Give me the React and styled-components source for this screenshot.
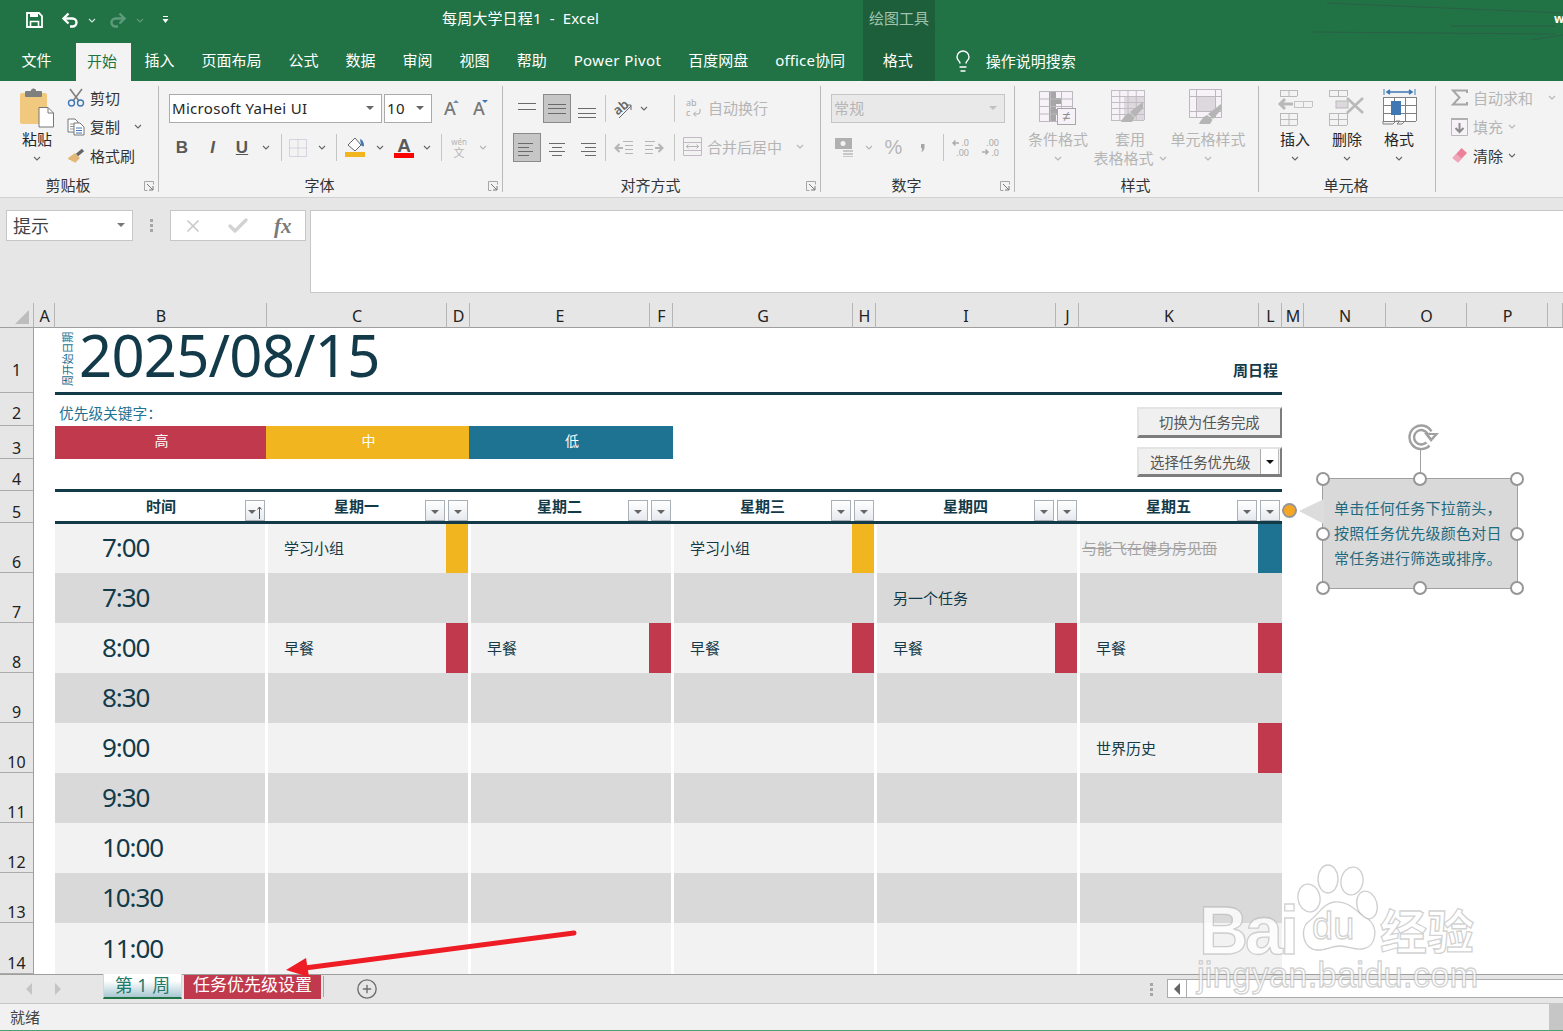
import React from "react";
import styled, { createGlobalStyle } from "styled-components";
import { Lightbulb, X, Check, CirclePlus } from "lucide-react";

const INK = "#123a49";
const TEAL = "#1e7393";
const RED = "#c1394d";
const AMBER = "#f1b51f";
const CJK = `"Noto Sans", "Noto Sans CJK SC", sans-serif`;

const GlobalStyle = createGlobalStyle`
  html, body { margin: 0; padding: 0; background: #fff; }
  body { font-family: ${CJK}; overflow: hidden; }
  * { box-sizing: border-box; }
`;

const Page = styled.div`
  position: relative;
  width: 1563px;
  height: 1031px;
  overflow: hidden;
  display: flex;
  flex-direction: column;
`;

/* title bar + tabs */
const TitleBar = styled.div`
  position: relative;
  height: 40px;
  background: #217346;
  display: flex;
  color: #fff;
  font-size: 15px;
  flex-shrink: 0;
`;
const Qat = styled.div`
  width: 442px;
  padding: 12px 0 0 26px;
  display: flex;
  align-items: flex-start;
`;
const QatSlot = styled.div`
  width: ${(p) => p.$w}px;
  padding-left: ${(p) => p.$pl || 0}px;
  height: 16px;
  display: flex;
  align-items: center;
`;
const WindowTitle = styled.div`
  width: 421px;
  line-height: 37px;
  white-space: pre;
  letter-spacing: 0.15px;
`;
const ContextLabel = styled.div`
  width: 72px;
  background: #1d5e3b;
  color: #9fc4ae;
  text-align: center;
  line-height: 37px;
`;
const UserName = styled.div`
  margin-left: auto;
  width: 9px;
  font-weight: 700;
  font-size: 12px;
  line-height: 37px;
`;
const Decor = styled.svg`
  position: absolute;
  right: 0;
  top: 0;
  pointer-events: none;
`;
const TabBar = styled.div`
  height: 41px;
  background: #217346;
  display: flex;
  padding-left: 8px;
  flex-shrink: 0;
  position: relative;
`;
const Tab = styled.div`
  padding: 0 13.5px;
  height: 38px;
  color: #fff;
  font-size: 15px;
  line-height: 41px;
  white-space: nowrap;
  letter-spacing: ${(p) => p.$ls || 0}px;
`;
const ActiveTab = styled(Tab)`
  margin: 3px 0 0 11px;
  padding: 0 14px 0 11px;
  height: 38px;
  line-height: 36px;
  background: #f3f3f3;
  color: #217346;
`;
const ContextTab = styled(Tab)`
  margin-left: 4px;
  width: 72px;
  height: 41px;
  padding: 0 2px 0 0;
  text-align: center;
  background: #1d5e3b;
`;
const SearchHint = styled.div`
  margin-left: 16px;
  display: flex;
  align-items: center;
  gap: 11px;
  color: #fff;
  font-size: 15px;
  height: 41px;
`;

/* ribbon */
const Ribbon = styled.div`
  height: 117px;
  background: #f3f3f3;
  border-bottom: 1px solid #d2d2d2;
  display: flex;
  padding-top: 5px;
  flex-shrink: 0;
`;
const Group = styled.div`
  position: relative;
  width: ${(p) => p.$w}px;
  height: 106px;
  border-right: ${(p) => (p.$open ? "none" : "1px solid #b9b9b9")};
  display: flex;
  flex-direction: column;
  flex-shrink: 0;
`;
const GroupBody = styled.div`
  height: 92px;
  padding-left: ${(p) => p.$pl || 0}px;
  display: ${(p) => (p.$flex ? "flex" : "block")};
`;
const GroupLabel = styled.div`
  text-align: center;
  font-size: 15px;
  line-height: 14px;
  color: #333;
  margin-left: ${(p) => p.$ml || 0}px;
`;
const Launcher = styled.svg`
  position: absolute;
  right: 4px;
  bottom: 1px;
`;
const ToolRow = styled.div`
  height: 29px;
  margin-top: ${(p) => p.$mt ?? 8}px;
  padding-left: ${(p) => p.$pl || 0}px;
  display: flex;
  align-items: center;
`;
const Slot = styled.div`
  width: ${(p) => p.$w}px;
  height: 29px;
  margin-left: ${(p) => p.$ml || 0}px;
  flex-shrink: 0;
  display: flex;
  align-items: center;
  justify-content: center;
  font-size: ${(p) => p.$fs || 15}px;
  color: ${(p) => (p.$off ? "#b5b5b5" : "#595959")};
  background: ${(p) => (p.$on ? "#c6c6c6" : "none")};
  border: ${(p) => (p.$on ? "1px solid #8a8a8a" : "none")};
  font-weight: ${(p) => (p.$bold ? 700 : 400)};
  font-style: ${(p) => (p.$italic ? "italic" : "normal")};
  text-decoration: ${(p) => (p.$under ? "underline" : "none")};
  font-family: ${(p) => (p.$latin ? `"Liberation Sans", sans-serif` : "inherit")};
`;
const ToolSep = styled.div`
  width: 1px;
  height: 27px;
  margin-left: ${(p) => p.$ml || 0}px;
  background: #c6c6c6;
  flex-shrink: 0;
`;
const ComboBox = styled.div`
  width: ${(p) => p.$w}px;
  height: 29px;
  margin-left: ${(p) => p.$ml || 0}px;
  background: ${(p) => (p.$off ? "#e9e9e9" : "#fff")};
  border: 1px solid ${(p) => (p.$off ? "#c6c6c6" : "#ababab")};
  display: flex;
  align-items: center;
  justify-content: space-between;
  padding: 0 7px 2px 2px;
  font-size: 15px;
  letter-spacing: 0.3px;
  color: ${(p) => (p.$off ? "#b5b5b5" : "#262626")};
  flex-shrink: 0;
`;
const Caret = styled.span`
  width: 0;
  height: 0;
  border-left: ${(p) => p.$s || 4}px solid transparent;
  border-right: ${(p) => p.$s || 4}px solid transparent;
  border-top: ${(p) => p.$s || 4}px solid ${(p) => p.$c || "#666"};
  flex-shrink: 0;
`;
const NavCaret = styled.span`
  width: 0;
  height: 0;
  border-top: 6px solid transparent;
  border-bottom: 6px solid transparent;
  ${(p) => (p.$right ? "border-left" : "border-right")}: 6px solid ${(p) => p.$c || "#c4c4c4"};
`;
const WideTool = styled.div`
  margin-left: ${(p) => p.$ml}px;
  display: flex;
  align-items: center;
  gap: ${(p) => p.$gap}px;
  font-size: 15px;
  color: #b5b5b5;
  height: 29px;
  padding-bottom: 2px;
  flex-shrink: 0;
`;
const BigCol = styled.div`
  width: ${(p) => p.$w}px;
  display: flex;
  flex-direction: column;
  align-items: center;
  font-size: 15px;
  line-height: 19px;
  color: ${(p) => (p.$off ? "#b5b5b5" : "#262626")};
  flex-shrink: 0;
`;
const BigIcon = styled.div`
  height: 44px;
  display: flex;
  align-items: center;
  justify-content: center;
`;
const BigText = styled.div`
  height: 19px;
  display: flex;
  align-items: center;
  gap: 5px;
  white-space: nowrap;
`;
const SmallList = styled.div`
  margin-left: ${(p) => p.$ml || 0}px;
  margin-top: -3px;
  display: flex;
  flex-direction: column;
`;
const SmallRow = styled.div`
  height: 29px;
  display: flex;
  align-items: center;
  font-size: 15px;
  color: ${(p) => (p.$off ? "#b5b5b5" : "#333")};
`;
const SmallIcon = styled.div`
  width: 18px;
  margin-right: 5px;
  display: flex;
  justify-content: center;
`;
const TailChev = styled.span`
  margin-left: ${(p) => p.$ml}px;
  display: flex;
`;

/* formula bar */
const FormulaZone = styled.div`
  height: 105px;
  background: #e6e6e6;
  display: flex;
  align-items: flex-start;
  padding: 12px 0 0 6px;
  flex-shrink: 0;
`;
const NameBox = styled.div`
  width: 127px;
  height: 31px;
  background: #fff;
  border: 1px solid #c6c6c6;
  display: flex;
  align-items: center;
  justify-content: space-between;
  padding: 0 7px 2px 6px;
  font-size: 18px;
  color: #444;
`;
const Grip = styled.div`
  width: 37px;
  height: 31px;
  display: flex;
  flex-direction: column;
  align-items: center;
  justify-content: center;
  gap: 2px;
  span { width: 3px; height: 3px; background: #a6a6a6; }
`;
const FxBox = styled.div`
  width: 136px;
  height: 31px;
  background: #fff;
  border: 1px solid #c6c6c6;
  display: flex;
  align-items: center;
  padding-left: 12px;
  gap: 23px;
`;
const FxMark = styled.span`
  font-family: "Liberation Serif", serif;
  font-style: italic;
  font-weight: 700;
  font-size: 21px;
  line-height: 26px;
  color: #7a7a7a;
  margin-left: 1px;
`;
const FormulaInput = styled.div`
  width: 1253px;
  height: 83px;
  margin-left: 4px;
  background: #fff;
  border: 1px solid #c6c6c6;
  border-right: none;
`;

/* worksheet */
const Sheet = styled.div`
  position: relative;
  height: 671px;
  flex-shrink: 0;
  background: #fff;
  display: grid;
  grid-template-columns: 34px 21px 212px 180px 23px 180px 23px 180px 23px 180px 23px 180px 23px 22px 82px 81px 81px 15px;
  grid-template-rows: 25px 65px 33px 33px 32px 32px repeat(8, 50px) 51px;
  overflow: hidden;
`;
const Corner = styled.div`
  grid-column: 1;
  grid-row: 1;
  background: #e6e6e6;
  border-bottom: 1px solid #9e9e9e;
  border-right: 1px solid #b5b5b5;
  display: flex;
  align-items: flex-end;
  justify-content: flex-end;
  padding: 0 3px 3px 0;
`;
const ColHead = styled.div`
  grid-row: 1;
  background: #e6e6e6;
  border-bottom: 1px solid #9e9e9e;
  border-right: 1px solid #b5b5b5;
  font-size: 16px;
  line-height: 26px;
  padding-left: 1px;
  text-align: center;
  color: #222;
  overflow: hidden;
`;
const RowHead = styled.div`
  grid-column: 1;
  grid-row: ${(p) => p.$row};
  background: #e6e6e6;
  border-bottom: 1px solid #ababab;
  border-right: 1px solid #9e9e9e;
  font-size: 16px;
  color: #222;
  display: flex;
  align-items: flex-end;
  justify-content: center;
  line-height: 15px;
  padding-bottom: ${(p) => p.$pb}px;
`;
const DateRow = styled.div`
  grid-column: 3 / 14;
  grid-row: 2;
  display: flex;
  align-items: flex-start;
  position: relative;
  z-index: 1;
  box-shadow: 0 2px 0 ${INK}, inset 0 -1px 0 ${INK};
`;
const DateHint = styled.div`
  writing-mode: vertical-rl;
  text-orientation: sideways;
  transform: rotate(180deg);
  font-size: 11px;
  letter-spacing: -0.2px;
  line-height: 13px;
  height: 53px;
  color: ${TEAL};
  margin: 5px 0 0 6px;
  white-space: nowrap;
`;
const DateText = styled.div`
  font-size: 58px;
  letter-spacing: -0.8px;
  line-height: 52px;
  color: ${INK};
  margin: 1px 0 0 5px;
`;
const SheetName = styled.div`
  margin: 31px 4px 0 auto;
  font-size: 15px;
  font-weight: 700;
  color: ${INK};
`;
const KeyLabel = styled.div`
  grid-column: 3 / 5;
  grid-row: 3;
  font-size: 14.7px;
  color: ${TEAL};
  padding: 12px 0 0 4px;
  line-height: 17px;
`;
const KeyCell = styled.div`
  grid-column: ${(p) => p.$col} / span 2;
  grid-row: 4;
  margin: 0 ${(p) => p.$mr || 0}px 0 -1px;
  background: ${(p) => p.$bg};
  color: #fff;
  font-size: 14px;
  display: flex;
  align-items: center;
  justify-content: center;
  padding: 0 0 5px 2px;
`;
const HighKey = styled(KeyCell)`
  grid-column: 3;
  margin: 0 1px 0 0;
`;
const MacroStack = styled.div`
  grid-column: 12 / 14;
  grid-row: 3 / 6;
  display: flex;
  flex-direction: column;
  align-items: flex-end;
  gap: 9px;
  padding-top: 14px;
`;
const MacroBtn = styled.div`
  width: 145px;
  height: ${(p) => p.$h}px;
  background: #f0f0f0;
  border-top: 2px solid #e4e4e4;
  border-left: 2px solid #e4e4e4;
  border-right: 2px solid #7d7d7d;
  border-bottom: 3px solid #7d7d7d;
  display: flex;
  align-items: center;
  justify-content: space-between;
  font-size: 14.4px;
  line-height: 22px;
  color: #555;
  padding-left: ${(p) => p.$pl}px;
`;
const MacroLabel = styled.span`
  margin-top: 2px;
`;
const MacroDrop = styled.div`
  width: 19px;
  height: 100%;
  background: #fff;
  border-left: 1px solid #aaa;
  border-right: 1px solid #bbb;
  margin-right: 1px;
  display: flex;
  align-items: center;
  justify-content: center;
`;
const HeadRow = styled.div`
  grid-column: ${(p) => p.$col} / span ${(p) => p.$span || 1};
  grid-row: 6;
  position: relative;
  z-index: 1;
  display: flex;
  align-items: flex-start;
`;
const HeadRule = styled.div`
  grid-column: 3 / 14;
  grid-row: ${(p) => p.$row};
  align-self: end;
  height: 3px;
  background: ${INK};
  position: relative;
  z-index: 2;
  transform: translateY(${(p) => p.$shift}px);
`;
const HeadLabel = styled.div`
  flex: 1;
  text-align: center;
  padding-left: ${(p) => p.$pl || 21}px;
  font-size: 15px;
  font-weight: 700;
  color: ${INK};
  line-height: 31px;
`;
const FilterBtn = styled.div`
  width: 20px;
  height: 21px;
  margin: 9px 2px 0 ${(p) => p.$ml || 0}px;
  border: 1px solid #aab0b7;
  background: linear-gradient(#ffffff, #e6eaef);
  display: flex;
  align-items: center;
  justify-content: center;
  padding-top: 3px;
  gap: 1px;
  flex-shrink: 0;
  position: relative;
  z-index: 3;
`;
const TimeCell = styled.div`
  grid-column: 3;
  grid-row: ${(p) => p.$row};
  background: ${(p) => (p.$alt ? "#d9d9d9" : "#f2f2f2")};
  border-right: 2px solid #fff;
  padding: 0 0 2px 47px;
  display: flex;
  align-items: center;
  font-size: 26px;
  letter-spacing: -1.1px;
  color: ${INK};
`;
const DayCell = styled.div`
  grid-column: ${(p) => p.$col} / span 2;
  grid-row: ${(p) => p.$row};
  background: ${(p) => (p.$alt ? "#d9d9d9" : "#f2f2f2")};
  border-left: 1px solid #fff;
  border-right: ${(p) => (p.$last ? 0 : 2)}px solid #fff;
  display: flex;
  align-items: stretch;
  justify-content: space-between;
`;
const TaskText = styled.div`
  padding: 0 0 2px 16px;
  align-self: center;
  font-size: 15px;
  color: ${(p) => (p.$done ? "#a3a3a3" : INK)};
  text-decoration: ${(p) => (p.$done ? "line-through" : "none")};
  white-space: nowrap;
  margin-left: ${(p) => (p.$done ? -14 : 0)}px;
`;
const PriorityBar = styled.div`
  width: ${(p) => (p.$last ? 24 : 22)}px;
  background: ${(p) => p.$bg};
  flex-shrink: 0;
`;

/* selected callout floats over the sheet */
const Callout = styled.div`
  position: absolute;
  left: 1322px;
  top: 175px;
  width: 196px;
  height: 111px;
  background: #d9d9d9;
  border: 1px solid #a0a0a0;
  z-index: 4;
  display: flex;
  flex-direction: column;
  justify-content: center;
  padding-left: 11px;
  font-size: 15px;
  letter-spacing: 0.25px;
  line-height: 25px;
  color: #1f6a80;
  white-space: nowrap;
`;
const Handle = styled.span`
  position: absolute;
  left: ${(p) => p.$x}%;
  top: ${(p) => p.$y}%;
  width: 14px;
  height: 14px;
  margin: -7px 0 0 -7px;
  border-radius: 50%;
  background: #fff;
  border: 2.5px solid #969696;
`;
const OrangeHandle = styled.span`
  position: absolute;
  left: -41px;
  top: 24px;
  width: 15px;
  height: 15px;
  border-radius: 50%;
  background: #f5a623;
  border: 2.5px solid #969696;
`;
const Pointer = styled.svg`
  position: absolute;
  left: -25px;
  top: 19px;
`;
const RotateStem = styled.span`
  position: absolute;
  left: 50%;
  top: -29px;
  width: 1px;
  height: 29px;
  background: #a0a0a0;
`;
const RotateIcon = styled.svg`
  position: absolute;
  left: 85px;
  top: -56px;
`;

/* sheet tabs + status */
const SheetTabs = styled.div`
  height: 30px;
  flex-shrink: 0;
  background: #e6e6e6;
  border-top: 1px solid #9e9e9e;
  border-bottom: 1px solid #c6c6c6;
  display: flex;
  align-items: flex-start;
  position: relative;
`;
const TabNav = styled.div`
  width: 103px;
  height: 28px;
  padding-left: 26px;
  display: flex;
  align-items: center;
  gap: 23px;
`;
const ActiveSheet = styled.div`
  width: 79px;
  height: 25px;
  background: linear-gradient(#ffffff 30%, #a8c8d2);
  border: 1px solid #d7d7d7;
  border-top: none;
  border-bottom: 2px solid #217346;
  color: #1f7a6a;
  font-size: 18px;
  line-height: 22px;
  text-align: center;
  margin-top: -1px;
  white-space: pre;
`;
const OtherSheet = styled.div`
  width: 137px;
  height: 24px;
  margin-left: 2px;
  background: ${RED};
  color: #fff;
  font-size: 17px;
  line-height: 20px;
  text-align: center;
`;
const TabSep = styled.div`
  width: 1px;
  height: 21px;
  margin: 1px 0 0 2px;
  background: #a6a6a6;
`;
const AddSheet = styled.div`
  margin: 3px 0 0 32px;
  display: flex;
  color: #6e6e6e;
`;
const ScrollGrip = styled(Grip)`
  margin-left: auto;
  width: 32px;
  height: 28px;
`;
const HScroll = styled.div`
  width: 396px;
  height: 19px;
  margin-top: 4px;
  background: #fff;
  border: 1px solid #ababab;
  border-right: none;
  display: flex;
`;
const HScrollBtn = styled.div`
  width: 19px;
  height: 100%;
  border-right: 1px solid #ababab;
  display: flex;
  align-items: center;
  justify-content: center;
`;
const StatusBar = styled.div`
  height: 27px;
  flex-shrink: 0;
  background: #f1f1f1;
  border-bottom: 1px solid #4f9e6d;
  display: flex;
  justify-content: space-between;
  padding-left: 10px;
  font-size: 15px;
  line-height: 27px;
  color: #444;
`;
const StatusEnd = styled.div`
  width: 14px;
  background: #c6c6c6;
`;

/* overlays */
const RedArrow = styled.svg`
  position: absolute;
  left: 270px;
  top: 920px;
  z-index: 6;
  pointer-events: none;
`;
const Watermark = styled.div`
  position: absolute;
  left: 1197px;
  top: 860px;
  width: 290px;
  z-index: 7;
  pointer-events: none;
  font-family: "Liberation Sans", sans-serif;
  color: rgba(255, 255, 255, 0.78);
  -webkit-text-stroke: 1.3px rgba(165, 165, 165, 0.5);
`;
const MarkTop = styled.div`
  display: flex;
  align-items: flex-end;
  height: 100px;
`;
const MarkWord = styled.span`
  font-size: 68px;
  font-weight: 700;
  line-height: 68px;
  letter-spacing: -3px;
  width: 97px;
  margin: 0 0 -4px 2px;
`;
const MarkPaw = styled.div`
  position: relative;
  width: 84px;
  height: 96px;
  flex-shrink: 0;
  align-self: flex-start;
`;
const MarkDu = styled.span`
  position: absolute;
  left: 16px;
  bottom: 10px;
  font-size: 38px;
  line-height: 40px;
  font-weight: 400;
`;
const MarkCjk = styled.span`
  font-family: "Noto Sans CJK SC", sans-serif;
  font-size: 47px;
  font-weight: 700;
  line-height: 62px;
  white-space: nowrap;
`;
const MarkUrl = styled.div`
  font-size: 34.5px;
  line-height: 34px;
  letter-spacing: 0.2px;
  margin-top: -2px;
  white-space: nowrap;
`;

/* icons */
const Svg = ({ w, h, children }) => (
  <svg width={w} height={h} viewBox={`0 0 ${w} ${h}`} style={{ display: "block", flexShrink: 0, overflow: "visible" }}>
    {children}
  </svg>
);
const Chev = ({ c = "#666" }) => (
  <Svg w={8} h={5}>
    <polyline points="1,1 4,4 7,1" fill="none" stroke={c} strokeWidth="1.1" />
  </Svg>
);
const OFFC = "#b5b5b5";
const SaveIcon = () => (
  <Svg w={17} h={16}>
    <path d="M1 1h12l3 3v11H1z" fill="none" stroke="#fff" strokeWidth="1.8" />
    <rect x="4" y="1" width="8" height="4" fill="#fff" />
    <path d="M4.5 15V9.5h8V15" fill="none" stroke="#fff" strokeWidth="1.6" />
  </Svg>
);
const UndoIcon = ({ flip, c = "#fff" }) => (
  <Svg w={18} h={16}>
    <g transform={flip ? "translate(18 0) scale(-1 1)" : undefined} fill="none" stroke={c} strokeWidth="2.4">
      <path d="M3 6.5h8.5a4 4 0 0 1 0 8H9" />
      <path d="M7.5 1.5 2.5 6.5l5 5" />
    </g>
  </Svg>
);
const CustomizeIcon = () => (
  <Svg w={7} h={8}>
    <path d="M1 .5h5" stroke="#fff" />
    <path d="M.5 3h6L3.500 7z" fill="#fff" />
  </Svg>
);
const PasteIcon = () => (
  <Svg w={36} h={40}>
    <rect x="1" y="5" width="27" height="31" rx="2" fill="#f0c97f" />
    <rect x="6" y="3" width="17" height="6" rx="1" fill="#7f7f7f" />
    <circle cx="14.5" cy="3" r="2.6" fill="#7f7f7f" />
    <path d="M20 19.5h9l5.5 5.5v14H20z" fill="#fff" stroke="#777" />
    <path d="M29 19.5V25h5.5" fill="none" stroke="#777" />
  </Svg>
);
const ScissorsIcon = () => (
  <Svg w={18} h={19}>
    <path d="M3 1l9 12M15 1L6 13" stroke="#808080" strokeWidth="1.6" />
    <circle cx="4.5" cy="15" r="3" fill="none" stroke="#3f78b5" strokeWidth="1.4" />
    <circle cx="13.5" cy="15" r="3" fill="none" stroke="#3f78b5" strokeWidth="1.4" />
  </Svg>
);
const CopyIcon = () => (
  <Svg w={18} h={18}>
    <path d="M1 1h7l3 3v10H1z" fill="#fff" stroke="#777" />
    <path d="M3 6h5M3 8.5h5M3 11h5" stroke="#999" />
    <path d="M7 5h6l4 4v8H7z" fill="#fff" stroke="#777" />
    <path d="M9 10h6M9 12.5h6M9 15h6" stroke="#3f78b5" />
  </Svg>
);
const BrushIcon = () => (
  <Svg w={18} h={16}>
    <path d="M1 10l7-5 5 5-5 5-2-2-1 1-1-2-2 0z" fill="#e2b778" />
    <path d="M10 7l6-5" stroke="#666" strokeWidth="3.4" />
  </Svg>
);
const LaunchMark = () => (
  <Launcher width="10" height="10" viewBox="0 0 10 10">
    <path d="M.5 9.5V.5h9" fill="none" stroke="#a6a6a6" />
    <path d="M3 3l6 6M9 5v4H5" fill="none" stroke="#777" />
    <path d="M.5 9.5h3M9.5.5v3" stroke="#a6a6a6" />
  </Launcher>
);
const SizeA = ({ up }) => (
  <Svg w={20} h={19}>
    <text x="4" y="16" fontSize="18" fontFamily="Noto Sans" fontWeight="500" fill="#777">A</text>
    <path d={up ? "M13 4l3-3 3 3z" : "M13 1h6l-3 3z"} fill={up ? "#6f8fb0" : "#3f78b5"} />
  </Svg>
);
const BorderIcon = () => (
  <Svg w={18} h={18}>
    <path d="M.5.5h17v17H.5zM9 .5v17M.5 9h17" fill="none" stroke="#bfb1ca" strokeDasharray="1 1" />
  </Svg>
);
const FillIcon = () => (
  <Svg w={20} h={21}>
    <path d="M3 8l7-7 6 7-6 6z" fill="#fff" stroke="#666" />
    <path d="M15 2c3 1 4 4 4 7-1 1-2 0-3-1z" fill="#3f78b5" />
    <rect x="0" y="15" width="20" height="5" fill={AMBER} />
  </Svg>
);
const FontColorIcon = () => (
  <Svg w={20} h={22}>
    <text x="10" y="15" textAnchor="middle" fontSize="19" fontWeight="700" fontFamily="Liberation Sans" fill="#595959">A</text>
    <rect x="0" y="16" width="20" height="5" fill="#f00" />
  </Svg>
);
const WenIcon = () => (
  <Svg w={18} h={20}>
    <text x="9" y="7" textAnchor="middle" fontSize="8" fontFamily="Noto Sans" fill={OFFC}>wén</text>
    <text x="9" y="19" textAnchor="middle" fontSize="11" fontFamily="Noto Sans CJK SC" fill={OFFC}>文</text>
  </Svg>
);
const AlignIcon = ({ rows }) => (
  <Svg w={18} h={18}>
    {rows.map(([x1, x2, y], i) => (
      <line key={i} x1={x1} x2={x2} y1={y + 0.5} y2={y + 0.5} stroke="#6a6a6a" />
    ))}
  </Svg>
);
const OrientIcon = () => (
  <Svg w={20} h={20}>
    <text x="1" y="13" fontSize="13" fontWeight="600" fontFamily="Noto Sans" fill="#666" transform="rotate(-40 8 10)">ab</text>
    <path d="M6 19l12-12M13 6h5v5" fill="none" stroke="#666" />
  </Svg>
);
const WrapIcon = () => (
  <Svg w={17} h={20}>
    <text x="1" y="8" fontSize="9" fontFamily="Noto Sans" fill="#aaa">ab</text>
    <text x="1" y="18" fontSize="9" fontFamily="Noto Sans" fill="#aaa">c</text>
    <path d="M15 11v3a2 2 0 0 1-2 2H9M11 13.5L8.5 16l2.5 2.5" fill="none" stroke="#aaa" />
  </Svg>
);
const MergeIcon = () => (
  <Svg w={19} h={19}>
    <path d="M.5.5h18v18H.5zM.5 5.5h18M.5 13.5h18" fill="none" stroke="#c4b8c6" />
    <path d="M3 9.5h13M5.5 7.5l-2 2 2 2M13.5 7.5l2 2-2 2" fill="none" stroke={OFFC} />
  </Svg>
);
const IndentIcon = ({ flip }) => (
  <Svg w={18} h={16}>
    <g transform={flip ? "translate(18 0) scale(-1 1)" : undefined}>
      <path d="M1 8h7M4.5 4L.5 8l4 4" fill="none" stroke={OFFC} strokeWidth="2" />
      <path d="M8 1.5h10M10 5.5h8M10 9.5h8M10 13.5h8" stroke={OFFC} />
    </g>
  </Svg>
);
const CurrencyIcon = () => (
  <Svg w={19} h={19}>
    <rect x="0" y="0" width="17" height="11" fill="#b0b0b0" />
    <circle cx="8" cy="5.5" r="2.5" fill="#f3f3f3" />
    <path d="M8 12h10v2H8zM8 15h10v2H8zM8 18h10v1H8z" fill="#c8c8c8" />
  </Svg>
);
const CommaIcon = () => (
  <Svg w={6} h={10}>
    <path d="M1 1h3.500v3.500C4.500 6.500 3 8.500 1 9.500c1-1.500 1.300-3 .8-4.500H1z" fill="#a6a6a6" />
  </Svg>
);
const DecimalIcon = ({ more }) => (
  <Svg w={18} h={19}>
    <text x="17" y="8" textAnchor="end" fontSize="9" fontFamily="Noto Sans" fill="#aaa">{more ? ".00" : ".0"}</text>
    <text x="17" y="18" textAnchor="end" fontSize="9" fontFamily="Noto Sans" fill="#aaa">{more ? ".0" : ".00"}</text>
    {more ? (
      <path d="M0 14h6M3.5 11.5L6 14l-2.500 2.500" fill="none" stroke="#aaa" strokeWidth="1.4" />
    ) : (
      <path d="M7 5H1M3.500 2.500L1 5l2.500 2.500" fill="none" stroke="#aaa" strokeWidth="1.4" />
    )}
  </Svg>
);
const gridLines = (x, y, w, h, cols, rows, c) => {
  const out = [];
  for (let i = 0; i <= cols; i++) out.push(`M${x + (w * i) / cols + 0.5} ${y}v${h}`);
  for (let i = 0; i <= rows; i++) out.push(`M${x} ${y + (h * i) / rows + 0.5}h${w}`);
  return <path d={out.join("")} fill="none" stroke={c} />;
};
const CondIcon = () => (
  <Svg w={38} h={35}>
    <rect x="0" y="0" width="33" height="30" fill="#f6f2f7" />
    <path d="M10 0h7v7h5v6h-5v5h10v6H17v6h-7z" fill="#a6a6a6" />
    {gridLines(0, 0, 33, 30, 3, 4, "#bdb7c0")}
    <rect x="18.500" y="17.500" width="18" height="16" fill="#f6f2f7" stroke="#a6a6a6" />
    <text x="27.500" y="30" textAnchor="middle" fontSize="14" fontFamily="Liberation Sans" fill="#8c8c8c">≠</text>
  </Svg>
);
const BrushCorner = ({ x, y }) => (
  <g transform={`translate(${x} ${y})`}>
    <path d="M22 0v6L14 15 9 10z" fill="#b5b5b5" />
    <path d="M8 11c-4 2-7 6-8 9h11c2-3 3-4 2-5z" fill="#b5b5b5" />
  </g>
);
const TableIcon = () => (
  <Svg w={38} h={36}>
    <rect x="0" y="0" width="33" height="30" fill="#f6f2f7" />
    <rect x="13" y="6" width="20" height="24" fill="#ddd8dd" />
    {gridLines(0, 0, 33, 30, 4, 5, "#c2bcc5")}
    <BrushCorner x={10} y={12} />
  </Svg>
);
const CellStyleIcon = () => (
  <Svg w={38} h={38}>
    <rect x="0" y="0" width="33" height="29" fill="#f6f2f7" />
    <rect x="7" y="7" width="19" height="15" fill="#ddd8dd" />
    <path d="M.5.5h32v28H.5zM7.500 0v29M26.500 0v29M0 7.500h33M0 22.500h33" fill="none" stroke="#bdb7c0" />
    <BrushCorner x={10} y={15} />
  </Svg>
);
const InsertIcon = () => (
  <Svg w={37} h={36}>
    {gridLines(3, 0, 17, 6, 2, 1, "#b9b9b9")}
    {gridLines(17, 11, 18, 6, 2, 1, "#c5c5c5")}
    <path d="M16 14H3M8 9l-5 5 5 5" fill="none" stroke="#b9b9b9" strokeWidth="3" />
    {gridLines(3, 23, 17, 12, 2, 2, "#b9b9b9")}
  </Svg>
);
const DeleteIcon = () => (
  <Svg w={36} h={36}>
    {gridLines(0, 0, 18, 6, 2, 1, "#b9b9b9")}
    <rect x="7" y="11" width="12" height="7" fill="#ddd8dd" stroke="#b9b9b9" />
    <path d="M18 8l16 15M34 8L18 23" stroke="#b9b9b9" strokeWidth="2.6" />
    {gridLines(0, 23, 18, 12, 2, 2, "#b9b9b9")}
  </Svg>
);
const FormatIcon = () => (
  <Svg w={35} h={38}>
    <path d="M2 0v6M33 0v6" stroke="#3f78b5" />
    <path d="M5 3h25M8 1L5 3l3 2M27 1l3 2-3 2" fill="none" stroke="#3f78b5" strokeWidth="1.6" />
    <rect x="1" y="8" width="33" height="24" fill="#fff" />
    {gridLines(1, 8, 33, 24, 3, 3, "#808080")}
    <rect x="9" y="12" width="10" height="14" fill="#3f78b5" />
    <path d="M1 32v3h10l3-3h4l-3 3h5l3-3" fill="none" stroke="#808080" />
  </Svg>
);
const SigmaIcon = () => (
  <Svg w={17} h={17}>
    <path d="M16 4V1.500H2l6.500 7-6.500 7h14V13" fill="none" stroke="#a6a6a6" strokeWidth="2" />
  </Svg>
);
const FillDownIcon = () => (
  <Svg w={17} h={18}>
    <path d="M.5 .5h16v17H.5z" fill="#f6f2f7" stroke="#b9b9b9" />
    <rect x="0" y="0" width="17" height="2" fill="#b0b0b0" />
    <path d="M8.500 5v9M4.500 10l4 4 4-4" fill="none" stroke="#8c8c8c" strokeWidth="2" />
  </Svg>
);
const EraserIcon = () => (
  <Svg w={17} h={17}>
    <path d="M10.500 1L16 6 7 15.500 1.500 11z" fill="#ec8199" />
    <path d="M1.500 11l4-4 5.500 4.500L7 15.500z" fill="#f2a7b8" />
  </Svg>
);
const SortIcon = () => (
  <Svg w={5} h={13}>
    <path d="M2.500 13V1M.5 3.500l2-2.500 2 2.500" fill="none" stroke="#555" />
  </Svg>
);
const MiniTriangle = () => (
  <svg width="15" height="14" viewBox="0 0 15 14" style={{ display: "block" }}>
    <path d="M14 0v14H0z" fill="#bdbdbd" />
  </svg>
);

const TOP_ROW = [[0, 18, 3], [0, 18, 9]];
const MID_ROW = [[0, 18, 4], [0, 18, 8], [0, 18, 13]];
const LOW_ROW = [[0, 18, 8], [0, 18, 13], [0, 18, 17]];
const LEFT_ROW = [[0, 15, 4], [0, 11, 8], [0, 15, 12], [0, 11, 16]];
const CENTER_ROW = [[1, 17, 4], [4, 14, 8], [1, 17, 12], [4, 14, 16]];
const RIGHT_ROW = [[2, 17, 4], [6, 17, 8], [2, 17, 12], [6, 17, 16]];

const TABS = [
  { name: "插入" },
  { name: "页面布局" },
  { name: "公式" },
  { name: "数据" },
  { name: "审阅" },
  { name: "视图" },
  { name: "帮助" },
  { name: "Power Pivot", ls: 0.4 },
  { name: "百度网盘" },
  { name: "office协同", ls: 0.12 },
];
const COLS = ["A", "B", "C", "D", "E", "F", "G", "H", "I", "J", "K", "L", "M", "N", "O", "P", ""];
const ROW_PADS = [14, 4, 2, 3, 2, 2, 2, 2, 2, 2, 2, 2, 2, 2];
const DAYS = [
  { col: 4, name: "星期一" },
  { col: 6, name: "星期二" },
  { col: 8, name: "星期三" },
  { col: 10, name: "星期四" },
  { col: 12, name: "星期五", last: true },
];
const TIMES = ["7:00", "7:30", "8:00", "8:30", "9:00", "9:30", "10:00", "10:30", "11:00"];
const TASKS = {
  "0-4": { text: "学习小组", color: AMBER },
  "0-8": { text: "学习小组", color: AMBER },
  "0-12": { text: "与能飞在健身房见面", color: TEAL, done: true },
  "1-10": { text: "另一个任务" },
  "2-4": { text: "早餐", color: RED },
  "2-6": { text: "早餐", color: RED },
  "2-8": { text: "早餐", color: RED },
  "2-10": { text: "早餐", color: RED },
  "2-12": { text: "早餐", color: RED },
  "4-12": { text: "世界历史", color: RED },
};
const HANDLES = [
  [0, 0], [50, 0], [100, 0],
  [0, 50], [100, 50],
  [0, 100], [50, 100], [100, 100],
];

const Filter = ({ ml, sort }) => (
  <FilterBtn $ml={ml}>
    <Caret $c="#666" />
    {sort && <SortIcon />}
  </FilterBtn>
);

const ClipboardGroup = () => (
  <Group $w={159}>
    <GroupBody $flex $pl={5}>
      <BigCol $w={64}>
        <BigIcon><PasteIcon /></BigIcon>
        <BigText>粘贴</BigText>
        <BigText><Chev /></BigText>
      </BigCol>
      <SmallList $ml={-2}>
        <SmallRow><SmallIcon><ScissorsIcon /></SmallIcon>剪切</SmallRow>
        <SmallRow>
          <SmallIcon><CopyIcon /></SmallIcon>复制
          <TailChev $ml={14}><Chev /></TailChev>
        </SmallRow>
        <SmallRow><SmallIcon><BrushIcon /></SmallIcon>格式刷</SmallRow>
      </SmallList>
    </GroupBody>
    <GroupLabel $ml={-22}>剪贴板</GroupLabel>
    <LaunchMark />
  </Group>
);

const FontGroup = () => (
  <Group $w={344}>
    <GroupBody>
      <ToolRow $pl={10}>
        <ComboBox $w={213}>Microsoft YaHei UI<Caret /></ComboBox>
        <ComboBox $w={48} $ml={2}>10<Caret /></ComboBox>
        <Slot $w={28} $ml={4}><SizeA up /></Slot>
        <Slot $w={30}><SizeA /></Slot>
      </ToolRow>
      <ToolRow $pl={8} $mt={10}>
        <Slot $w={30} $bold $latin $fs={17}>B</Slot>
        <Slot $w={31} $bold $italic $latin $fs={17}>I</Slot>
        <Slot $w={28} $bold $under $latin $fs={17}>U</Slot>
        <Slot $w={20}><Chev /></Slot>
        <ToolSep $ml={5} />
        <Slot $w={32}><BorderIcon /></Slot>
        <Slot $w={16}><Chev /></Slot>
        <ToolSep $ml={6} />
        <Slot $w={36}><FillIcon /></Slot>
        <Slot $w={14}><Chev /></Slot>
        <Slot $w={34}><FontColorIcon /></Slot>
        <Slot $w={12}><Chev /></Slot>
        <ToolSep $ml={8} />
        <Slot $w={34}><WenIcon /></Slot>
        <Slot $w={14}><Chev c={OFFC} /></Slot>
      </ToolRow>
    </GroupBody>
    <GroupLabel $ml={-22}>字体</GroupLabel>
    <LaunchMark />
  </Group>
);

const AlignGroup = () => (
  <Group $w={318}>
    <GroupBody>
      <ToolRow $pl={10}>
        <Slot $w={28}><AlignIcon rows={TOP_ROW} /></Slot>
        <Slot $w={28} $ml={2} $on><AlignIcon rows={MID_ROW} /></Slot>
        <Slot $w={32}><AlignIcon rows={LOW_ROW} /></Slot>
        <ToolSep $ml={2} />
        <Slot $w={34}><OrientIcon /></Slot>
        <Slot $w={8}><Chev /></Slot>
        <ToolSep $ml={26} />
        <WideTool $ml={10} $gap={6}><WrapIcon />自动换行</WideTool>
      </ToolRow>
      <ToolRow $pl={10} $mt={10}>
        <Slot $w={28} $on><AlignIcon rows={LEFT_ROW} /></Slot>
        <Slot $w={32}><AlignIcon rows={CENTER_ROW} /></Slot>
        <Slot $w={29}><AlignIcon rows={RIGHT_ROW} /></Slot>
        <ToolSep $ml={3} />
        <Slot $w={36}><IndentIcon /></Slot>
        <Slot $w={24}><IndentIcon flip /></Slot>
        <ToolSep $ml={8} />
        <WideTool $ml={8} $gap={5}><MergeIcon />合并后居中<TailChev $ml={9}><Chev c={OFFC} /></TailChev></WideTool>
      </ToolRow>
    </GroupBody>
    <GroupLabel $ml={-22}>对齐方式</GroupLabel>
    <LaunchMark />
  </Group>
);

const NumberGroup = () => (
  <Group $w={194}>
    <GroupBody>
      <ToolRow $pl={10}>
        <ComboBox $w={174} $off>常规<Caret $c="#c0c0c0" /></ComboBox>
      </ToolRow>
      <ToolRow $pl={10} $mt={10}>
        <Slot $w={27}><CurrencyIcon /></Slot>
        <Slot $w={21}><Chev c={OFFC} /></Slot>
        <Slot $w={29} $off $fs={20} $latin>%</Slot>
        <Slot $w={30}><CommaIcon /></Slot>
        <ToolSep $ml={5} />
        <Slot $w={34}><DecimalIcon /></Slot>
        <Slot $w={26}><DecimalIcon more /></Slot>
      </ToolRow>
    </GroupBody>
    <GroupLabel $ml={-22}>数字</GroupLabel>
    <LaunchMark />
  </Group>
);

const StyleGroup = () => (
  <Group $w={244}>
    <GroupBody $flex $pl={3}>
      <BigCol $w={80} $off>
        <BigIcon><CondIcon /></BigIcon>
        <BigText>条件格式</BigText>
        <BigText><Chev c={OFFC} /></BigText>
      </BigCol>
      <BigCol $w={64} $off>
        <BigIcon><TableIcon /></BigIcon>
        <BigText>套用</BigText>
        <BigText>表格格式<Chev c={OFFC} /></BigText>
      </BigCol>
      <BigCol $w={92} $off>
        <BigIcon><CellStyleIcon /></BigIcon>
        <BigText>单元格样式</BigText>
        <BigText><Chev c={OFFC} /></BigText>
      </BigCol>
    </GroupBody>
    <GroupLabel $ml={-2}>样式</GroupLabel>
  </Group>
);

const CellGroup = () => (
  <Group $w={177}>
    <GroupBody $flex $pl={10}>
      <BigCol $w={52}>
        <BigIcon><InsertIcon /></BigIcon>
        <BigText>插入</BigText>
        <BigText><Chev /></BigText>
      </BigCol>
      <BigCol $w={52}>
        <BigIcon><DeleteIcon /></BigIcon>
        <BigText>删除</BigText>
        <BigText><Chev /></BigText>
      </BigCol>
      <BigCol $w={52}>
        <BigIcon><FormatIcon /></BigIcon>
        <BigText>格式</BigText>
        <BigText><Chev /></BigText>
      </BigCol>
    </GroupBody>
    <GroupLabel $ml={-2}>单元格</GroupLabel>
  </Group>
);

const EditGroup = () => (
  <Group $w={127} $open>
    <GroupBody>
      <SmallList $ml={14}>
        <SmallRow $off><SmallIcon><SigmaIcon /></SmallIcon>自动求和<TailChev $ml={15}><Chev c={OFFC} /></TailChev></SmallRow>
        <SmallRow $off><SmallIcon><FillDownIcon /></SmallIcon>填充<TailChev $ml={5}><Chev c={OFFC} /></TailChev></SmallRow>
        <SmallRow><SmallIcon><EraserIcon /></SmallIcon>清除<TailChev $ml={5}><Chev /></TailChev></SmallRow>
      </SmallList>
    </GroupBody>
  </Group>
);

const Worksheet = () => (
  <Sheet>
    <Corner><MiniTriangle /></Corner>
    {COLS.map((c) => (
      <ColHead key={c}>{c}</ColHead>
    ))}
    {ROW_PADS.map((pb, i) => (
      <RowHead key={i} $row={i + 2} $pb={pb}>{i + 1}</RowHead>
    ))}

    <DateRow>
      <DateHint>周开始日期</DateHint>
      <DateText>2025/08/15</DateText>
      <SheetName>周日程</SheetName>
    </DateRow>

    <KeyLabel>优先级关键字：</KeyLabel>
    <HighKey $bg={RED}>高</HighKey>
    <KeyCell $col={4} $mr={1} $bg={AMBER}>中</KeyCell>
    <KeyCell $col={6} $bg={TEAL}>低</KeyCell>
    <MacroStack>
      <MacroBtn $h={31} $pl={20}><MacroLabel>切换为任务完成</MacroLabel></MacroBtn>
      <MacroBtn $h={30} $pl={11}>
        <MacroLabel>选择任务优先级</MacroLabel>
        <MacroDrop><Caret $c="#111" /></MacroDrop>
      </MacroBtn>
    </MacroStack>

    <HeadRule $row={5} $shift={1} />
    <HeadRule $row={6} $shift={1} />
    <HeadRow $col={3}>
      <HeadLabel $pl={22}>时间</HeadLabel>
      <Filter sort />
    </HeadRow>
    {DAYS.map((d) => (
      <React.Fragment key={d.col}>
        <HeadRow $col={d.col}>
          <HeadLabel>{d.name}</HeadLabel>
          <Filter />
        </HeadRow>
        <HeadRow $col={d.col + 1}>
          <Filter ml={1} />
        </HeadRow>
      </React.Fragment>
    ))}

    {TIMES.map((t, i) => (
      <React.Fragment key={t}>
        <TimeCell $row={i + 7} $alt={i % 2 === 1}>{t}</TimeCell>
        {DAYS.map((d) => {
          const task = TASKS[`${i}-${d.col}`];
          return (
            <DayCell key={d.col} $col={d.col} $row={i + 7} $alt={i % 2 === 1} $last={d.last}>
              {task && <TaskText $done={task.done}>{task.text}</TaskText>}
              {task && task.color && <PriorityBar $bg={task.color} $last={d.last} />}
            </DayCell>
          );
        })}
      </React.Fragment>
    ))}

    <Callout>
      <Pointer width="26" height="27" viewBox="0 0 26 27">
        <path d="M26 1v25L1 13z" fill="#dcdcdc" />
      </Pointer>
      <RotateStem />
      <RotateIcon width="32" height="28" viewBox="0 0 32 28">
        <path d="M20 21A9.500 9.500 0 1 1 21.500 9.500" fill="none" stroke="#a0a0a0" strokeWidth="7" />
        <path d="M20 21A9.500 9.500 0 1 1 21.500 9.500" fill="none" stroke="#fff" strokeWidth="2.200" />
        <path d="M16 10h15l-8 9z" fill="#a0a0a0" />
        <path d="M21 12h5l-2.500 3z" fill="#fff" />
      </RotateIcon>
      {HANDLES.map(([x, y]) => (
        <Handle key={`${x}-${y}`} $x={x} $y={y} />
      ))}
      <OrangeHandle />
      <div>单击任何任务下拉箭头，</div>
      <div>按照任务优先级颜色对日</div>
      <div>常任务进行筛选或排序。</div>
    </Callout>
  </Sheet>
);

export default function App() {
  return (
    <Page>
      <GlobalStyle />

      <TitleBar>
        <Qat>
          <QatSlot $w={35}><SaveIcon /></QatSlot>
          <QatSlot $w={24}><UndoIcon /></QatSlot>
          <QatSlot $w={24} $pl={3}><Chev c="#d5e5db" /></QatSlot>
          <QatSlot $w={27}><UndoIcon flip c="#5f9a7b" /></QatSlot>
          <QatSlot $w={26}><Chev c="#5f9a7b" /></QatSlot>
          <QatSlot $w={10}><CustomizeIcon /></QatSlot>
        </Qat>
        <WindowTitle>{"每周大学日程1  -  Excel"}</WindowTitle>
        <ContextLabel>绘图工具</ContextLabel>
        <UserName>w</UserName>
        <Decor width="260" height="75" viewBox="1303 0 260 75">
          <path d="M1327 3L1563 13M1451 26H1555M1313 32L1555 34M1394 41H1563M1411 59L1563 35M1401 70L1563 45" stroke="#2c5f45" fill="none" />
        </Decor>
      </TitleBar>

      <TabBar>
        <Tab>文件</Tab>
        <ActiveTab>开始</ActiveTab>
        {TABS.map((t) => (
          <Tab key={t.name} $ls={t.ls}>{t.name}</Tab>
        ))}
        <ContextTab>格式</ContextTab>
        <SearchHint>
          <Lightbulb size={24} strokeWidth={1.4} color="#fff" />
          操作说明搜索
        </SearchHint>
      </TabBar>

      <Ribbon>
        <ClipboardGroup />
        <FontGroup />
        <AlignGroup />
        <NumberGroup />
        <StyleGroup />
        <CellGroup />
        <EditGroup />
      </Ribbon>

      <FormulaZone>
        <NameBox>提示<Caret $c="#777" /></NameBox>
        <Grip><span /><span /><span /></Grip>
        <FxBox>
          <X size={20} strokeWidth={2} color="#c8c8c8" />
          <Check size={24} strokeWidth={3.4} color="#d2d2d2" />
          <FxMark>fx</FxMark>
        </FxBox>
        <FormulaInput />
      </FormulaZone>

      <Worksheet />

      <SheetTabs>
        <TabNav>
          <NavCaret />
          <NavCaret $right />
        </TabNav>
        <ActiveSheet>{"第 1 周"}</ActiveSheet>
        <OtherSheet>任务优先级设置</OtherSheet>
        <TabSep />
        <AddSheet><CirclePlus size={22} strokeWidth={1.5} /></AddSheet>
        <ScrollGrip><span /><span /><span /></ScrollGrip>
        <HScroll>
          <HScrollBtn><NavCaret $c="#666" /></HScrollBtn>
        </HScroll>
      </SheetTabs>
      <StatusBar>
        就绪
        <StatusEnd />
      </StatusBar>

      <RedArrow width="320" height="65" viewBox="270 920 320 65">
        <path d="M574 933L305 968" stroke="#ee1c25" strokeWidth="5" strokeLinecap="round" fill="none" />
        <path d="M286 970L306 958L309 977z" fill="#ee1c25" />
      </RedArrow>

      <Watermark>
        <MarkTop>
          <MarkWord>Bai</MarkWord>
          <MarkPaw>
            <svg width="84" height="96" viewBox="0 0 84 96" style={{ display: "block" }}>
              <g fill="rgba(255,255,255,.72)" stroke="rgba(165,165,165,.55)" strokeWidth="1.3">
                <ellipse cx="13" cy="38" rx="11" ry="14" transform="rotate(-10 13 38)" />
                <ellipse cx="32" cy="19" rx="10" ry="14" />
                <ellipse cx="56" cy="21" rx="11" ry="14" transform="rotate(10 56 21)" />
                <ellipse cx="71" cy="45" rx="10" ry="14" transform="rotate(-15 71 45)" />
                <path d="M38 42c-12 2-16 14-26 20-8 6-6 28 10 28 8 0 14-4 22-4s14 4 22 3c16-2 16-24 6-30C62 54 54 40 38 42z" />
              </g>
            </svg>
            <MarkDu>du</MarkDu>
          </MarkPaw>
          <MarkCjk>经验</MarkCjk>
        </MarkTop>
        <MarkUrl>jingyan.baidu.com</MarkUrl>
      </Watermark>
    </Page>
  );
}
